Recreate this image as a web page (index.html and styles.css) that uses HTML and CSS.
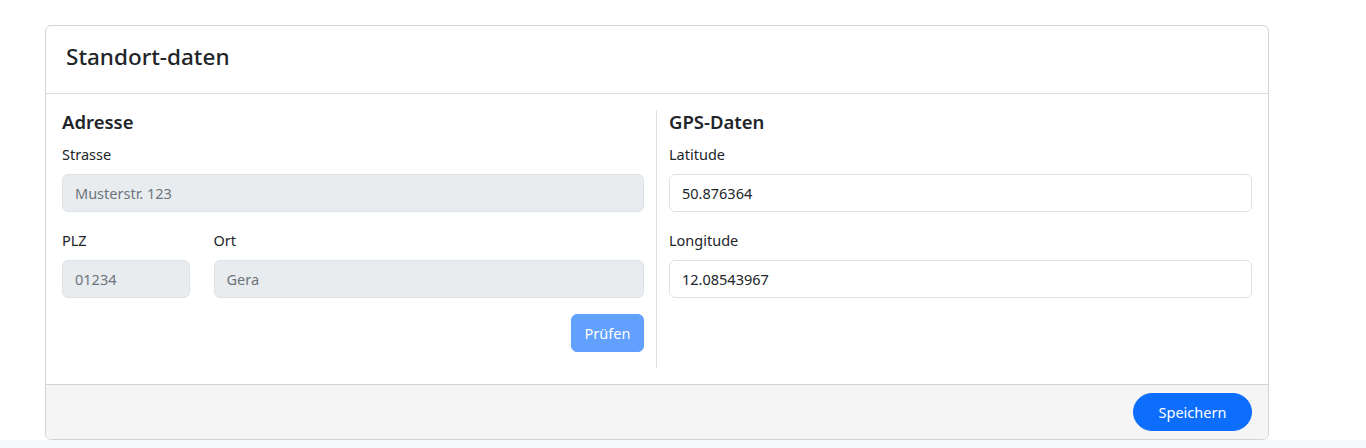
FILE: index.html
```html
<!DOCTYPE html>
<html lang="de">
<head>
<meta charset="utf-8">
<title>Standort-daten</title>
<link rel="stylesheet" href="styles.css">
</head>
<body>
<main class="page">
  <section class="card">
    <header class="card-header">
      <h4 class="card-title">Standort-daten</h4>
    </header>
    <div class="card-body">
      <div class="row">
        <div class="col">
          <h5 class="section-title">Adresse</h5>
          <div class="field">
            <label class="label">Strasse</label>
            <input class="input" type="text" placeholder="Musterstr. 123" disabled>
          </div>
          <div class="subrow">
            <div class="field">
              <label class="label">PLZ</label>
              <input class="input" type="text" placeholder="01234" disabled>
            </div>
            <div class="field">
              <label class="label">Ort</label>
              <input class="input" type="text" placeholder="Gera" disabled>
            </div>
          </div>
          <div class="actions">
            <button class="btn btn-primary btn-disabled" type="button" disabled>Prüfen</button>
          </div>
        </div>
        <div class="col col-divider">
          <h5 class="section-title">GPS-Daten</h5>
          <div class="field">
            <label class="label">Latitude</label>
            <input class="input" type="text" value="50.876364">
          </div>
          <div class="field">
            <label class="label">Longitude</label>
            <input class="input" type="text" value="12.08543967">
          </div>
        </div>
      </div>
    </div>
    <footer class="card-footer">
      <button class="btn btn-primary btn-pill" type="button">Speichern</button>
    </footer>
  </section>
</main>
</body>
</html>
```
FILE: styles.css
```css
* { box-sizing: border-box; }
html, body { margin: 0; padding: 0; }
body {
  background: #f8f9fa;
  font-family: "Noto Sans", "Open Sans", sans-serif;
  color: #212529;
  font-size: 15px;
}
.page {
  background: #fff;
  height: 440px;
  padding: 25px 0 0 45px;
}
.card {
  width: 1224px;
  border: 1px solid #d3d4d5;
  border-radius: 6px;
  background: #fff;
  overflow: hidden;
}
.card-header {
  height: 68px;
  padding: 0 20px;
  display: flex;
  align-items: center;
  border-bottom: 1px solid #dcdcdc;
}
.card-title {
  margin: 0;
  font-size: 22.5px;
  font-weight: 500;
  line-height: 28px;
  padding-bottom: 5px;
}
.card-body {
  padding: 16px;
}
.row {
  display: grid;
  grid-template-columns: 606px 1fr;
  margin: 0 -12px;
}
.col {
  padding: 0 12px;
}
.col-divider {
  border-left: 1px solid #dee2e6;
}
.section-title {
  margin: 0 0 8px;
  font-size: 18.5px;
  font-weight: 600;
  line-height: 24px;
}
.field {
  margin-bottom: 16px;
}
.label {
  display: block;
  line-height: 24px;
  margin-bottom: 8px;
  font-size: 14.5px;
}
.input {
  display: block;
  width: 100%;
  height: 38px;
  padding: 6px 12px;
  font: inherit;
  font-size: 14.5px;
  color: #212529;
  background: #fff;
  border: 1px solid #dee2e6;
  border-radius: 6px;
}
.input:disabled {
  background: #e9ecef;
}
.input::placeholder {
  color: #6c757d;
  opacity: 1;
}
.subrow {
  display: grid;
  grid-template-columns: calc(25% - 18px) 1fr;
  column-gap: 24px;
}
.actions {
  display: flex;
  justify-content: flex-end;
  margin-bottom: 16px;
}
.btn {
  height: 38px;
  padding: 0 12px;
  font: inherit;
  font-size: 14.5px;
  border: 1px solid transparent;
  border-radius: 6px;
  cursor: pointer;
}
.btn-primary {
  background: #0d6efd;
  border-color: #0d6efd;
  color: #fff;
}
.btn-disabled {
  opacity: 0.65;
  width: 73px;
}
.btn-pill {
  border-radius: 19px;
  width: 119px;
}
.card-footer {
  display: flex;
  justify-content: flex-end;
  padding: 8px 16px;
  background: #f5f5f5;
  border-top: 1px solid #d3d4d5;
}
```
